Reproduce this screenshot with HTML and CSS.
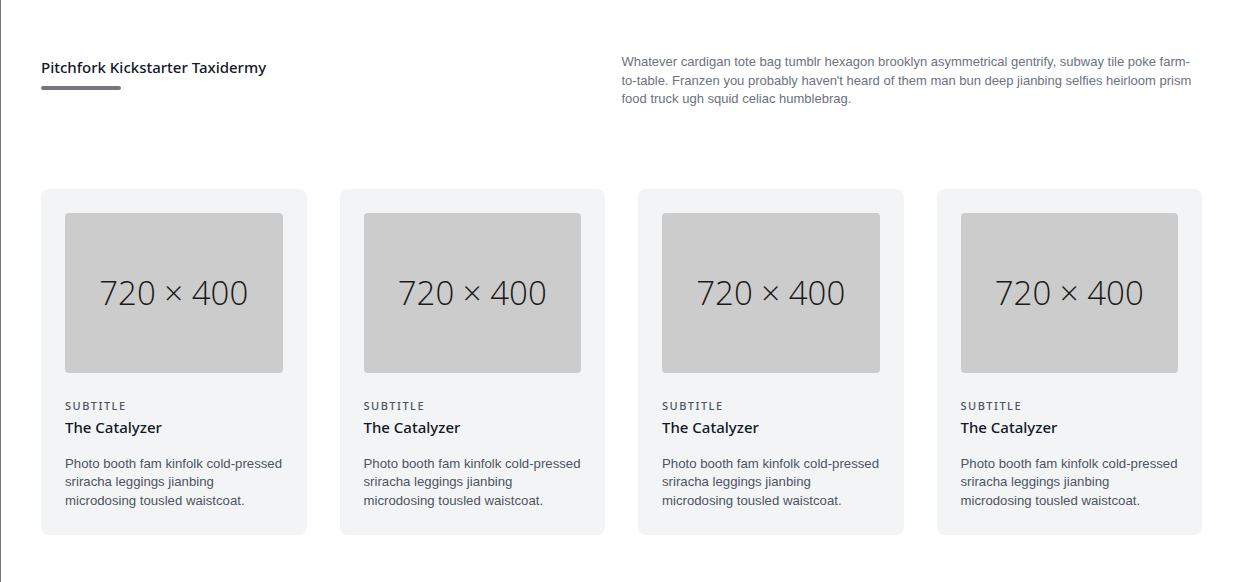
FILE: index.html
```html
<!DOCTYPE html>
<html lang="en">
<head>
<meta charset="utf-8">
<title>Pitchfork Kickstarter Taxidermy</title>
<link rel="stylesheet" href="styles.css">
</head>
<body>
<section class="page">
  <div class="container">
    <header class="intro">
      <div class="intro-title">
        <h1 class="heading">Pitchfork Kickstarter Taxidermy</h1>
        <div class="bar"></div>
      </div>
      <p class="intro-text">Whatever cardigan tote bag tumblr hexagon brooklyn asymmetrical gentrify, subway tile poke farm-to-table. Franzen you probably haven't heard of them man bun deep jianbing selfies heirloom prism food truck ugh squid celiac humblebrag.</p>
    </header>
    <div class="cards">
      <article class="card">
        <div class="thumb">720 × 400</div>
        <h3 class="subtitle">SUBTITLE</h3>
        <h2 class="card-title">The Catalyzer</h2>
        <p class="card-text">Photo booth fam kinfolk cold-pressed sriracha leggings jianbing microdosing tousled waistcoat.</p>
      </article>
      <article class="card">
        <div class="thumb">720 × 400</div>
        <h3 class="subtitle">SUBTITLE</h3>
        <h2 class="card-title">The Catalyzer</h2>
        <p class="card-text">Photo booth fam kinfolk cold-pressed sriracha leggings jianbing microdosing tousled waistcoat.</p>
      </article>
      <article class="card">
        <div class="thumb">720 × 400</div>
        <h3 class="subtitle">SUBTITLE</h3>
        <h2 class="card-title">The Catalyzer</h2>
        <p class="card-text">Photo booth fam kinfolk cold-pressed sriracha leggings jianbing microdosing tousled waistcoat.</p>
      </article>
      <article class="card">
        <div class="thumb">720 × 400</div>
        <h3 class="subtitle">SUBTITLE</h3>
        <h2 class="card-title">The Catalyzer</h2>
        <p class="card-text">Photo booth fam kinfolk cold-pressed sriracha leggings jianbing microdosing tousled waistcoat.</p>
      </article>
    </div>
  </div>
</section>
</body>
</html>
```
FILE: styles.css
```css
* { box-sizing: border-box; }
html, body { margin: 0; padding: 0; background: #ffffff; }
body {
  font-family: "Liberation Sans", Arial, sans-serif;
  border-left: 1px solid #777777;
  min-height: 582px;
}
.container {
  padding: 53px 31px 0 40px;
}
.intro {
  display: grid;
  grid-template-columns: 1fr 1fr;
  margin-bottom: 80px;
}
.heading {
  margin: 0;
  font-family: "Noto Sans", "Open Sans", sans-serif;
  font-weight: 500;
  font-size: 15px;
  line-height: 24px;
  color: #111827;
  padding-top: 2px;
}
.bar {
  width: 80px;
  height: 4px;
  border-radius: 2px;
  background: #76767c;
  margin-top: 7px;
}
.intro-text {
  margin: 0;
  font-size: 13px;
  line-height: 18.5px;
  color: #6b7280;
}
.cards {
  display: grid;
  grid-template-columns: repeat(4, 1fr);
  column-gap: 33px;
}
.card {
  background: #f3f4f6;
  border-radius: 8px;
  padding: 24px 24px 25px;
}
.thumb {
  height: 160px;
  border-radius: 4px;
  background: #cccccc;
  display: flex;
  align-items: center;
  justify-content: center;
  font-family: "Open Sans", sans-serif;
  font-weight: 300;
  font-size: 33px;
  color: #1a1a1a;
  margin-bottom: 25px;
}
.subtitle {
  margin: 0;
  font-family: "Noto Sans", "Open Sans", sans-serif;
  font-weight: 500;
  font-size: 11px;
  line-height: 16px;
  letter-spacing: 1.5px;
  color: #4b5563;
}
.card-title {
  margin: 2px 0 17px;
  font-family: "Noto Sans", "Open Sans", sans-serif;
  font-weight: 500;
  font-size: 15px;
  line-height: 22px;
  color: #111827;
}
.card-text {
  margin: 0;
  font-size: 13.2px;
  line-height: 18.5px;
  color: #4b5563;
}
```
